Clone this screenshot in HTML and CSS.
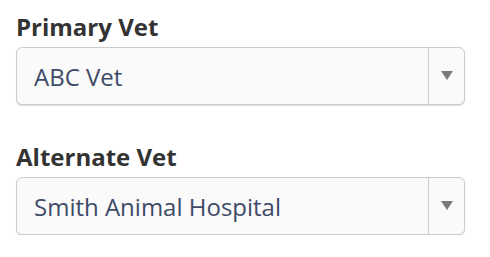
FILE: index.html
```html
<!DOCTYPE html>
<html>
<head>
<meta charset="utf-8">
<link rel="stylesheet" href="styles.css">
</head>
<body>
<div class="form">
  <div class="field">
    <label class="label">Primary Vet</label>
    <div class="select">
      <span class="value">ABC Vet</span>
      <span class="toggle"><span class="arrow"></span></span>
    </div>
  </div>
  <div class="field">
    <label class="label">Alternate Vet</label>
    <div class="select">
      <span class="value">Smith Animal Hospital</span>
      <span class="toggle"><span class="arrow"></span></span>
    </div>
  </div>
</div>
</body>
</html>
```
FILE: styles.css
```css
html, body {
  margin: 0;
  padding: 0;
  background: #ffffff;
}
body {
  font-family: "Open Sans", "DejaVu Sans", sans-serif;
}
.form {
  padding: 12px 25px 0 16px;
  display: flex;
  flex-direction: column;
  gap: 37px;
}
.field {
  display: flex;
  flex-direction: column;
  gap: 5px;
}
.label {
  font-size: 24px;
  font-weight: 700;
  line-height: 30px;
  color: #333333;
}
.select {
  display: flex;
  box-sizing: border-box;
  height: 58px;
  border: 1px solid #cccccc;
  border-radius: 6px;
  background: #fafafa;
  box-shadow: 0 1px 1px #dddddd;
}
.value {
  flex: 1;
  display: flex;
  align-items: center;
  padding-left: 17px;
  font-size: 24px;
  color: #3e4a66;
}
.toggle {
  box-sizing: border-box;
  width: 36px;
  border-left: 1px solid #cccccc;
  display: flex;
  align-items: center;
  justify-content: center;
}
.arrow {
  width: 0;
  height: 0;
  margin-top: -2px;
  border-left: 6px solid transparent;
  border-right: 6px solid transparent;
  border-top: 9px solid #7a7a7a;
}
```
